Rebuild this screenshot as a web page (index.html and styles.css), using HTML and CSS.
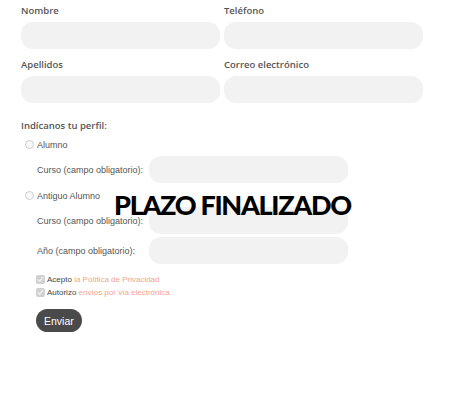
FILE: index.html
```html
<!DOCTYPE html>
<html lang="es">
<head>
    <meta charset="UTF-8">
    <meta name="viewport" content="width=device-width, initial-scale=1.0">
    <title>Inscripción</title>
    <link rel="stylesheet" href="styles.css">
</head>
<body>
    <form class="form">
        <div class="grid">
            <div class="field">
                <label>Nombre</label>
                <input type="text" class="input">
            </div>
            <div class="field">
                <label>Teléfono</label>
                <input type="text" class="input">
            </div>
            <div class="field">
                <label>Apellidos</label>
                <input type="text" class="input">
            </div>
            <div class="field">
                <label>Correo electrónico</label>
                <input type="text" class="input">
            </div>
        </div>

        <p class="section-title">Indícanos tu perfil:</p>

        <div class="radio-row">
            <input type="radio" name="perfil" disabled>
            <span>Alumno</span>
        </div>
        <div class="sub-row">
            <span class="sub-label">Curso (campo obligatorio):</span>
            <input type="text" class="input">
        </div>

        <div class="radio-row">
            <input type="radio" name="perfil" disabled>
            <span>Antiguo Alumno</span>
        </div>
        <div class="sub-row">
            <span class="sub-label">Curso (campo obligatorio):</span>
            <input type="text" class="input">
        </div>
        <div class="sub-row tight">
            <span class="sub-label">Año (campo obligatorio):</span>
            <input type="text" class="input">
        </div>

        <div class="check-row first">
            <input type="checkbox" checked disabled>
            <span>Acepto <a href="#">la Política de Privacidad</a></span>
        </div>
        <div class="check-row">
            <input type="checkbox" checked disabled>
            <span>Autorizo <a href="#">envíos por vía electrónica</a></span>
        </div>

        <button type="button" class="btn">Enviar</button>

        <div class="overlay">PLAZO FINALIZADO</div>
    </form>
</body>
</html>
```

FILE: styles.css
```css
body {
    margin: 0;
    font-family: "Liberation Sans", Arial, sans-serif;
    background: #fff;
    color: #555;
}
.form {
    position: relative;
    padding: 5px 0 0 21px;
    width: 402px;
}
.grid {
    display: grid;
    grid-template-columns: 199px 199px;
    column-gap: 4px;
}
.field label {
    display: block;
    font-family: "Open Sans", sans-serif;
    font-size: 9.5px;
    font-weight: 600;
    line-height: 12px;
    color: #555;
    margin-bottom: 5px;
}
.field:nth-child(n+3) label {
    margin-top: 10px;
}
.input {
    display: block;
    width: 199px;
    height: 27px;
    border: none;
    border-radius: 12px;
    background: #f2f2f2;
    box-sizing: border-box;
    padding: 0 10px;
}
.section-title {
    margin: 17px 0 0;
    font-family: "Open Sans", sans-serif;
    font-size: 9.5px;
    font-weight: 600;
    line-height: 12px;
    color: #555;
}
.radio-row {
    display: flex;
    align-items: center;
    height: 13px;
    margin-top: 6px;
    font-size: 9px;
}
.radio-row input {
    width: 9px;
    height: 9px;
    margin: 0 3px 0 4px;
}
.sub-row {
    display: flex;
    align-items: center;
    margin: 5px 0 0 16px;
    font-size: 9px;
}
.sub-row.tight {
    margin-top: 3px;
}
.sub-label {
    width: 112px;
}
.check-row {
    display: flex;
    align-items: center;
    height: 13px;
    margin-left: 15px;
    font-size: 8px;
    color: #444;
}
.check-row.first {
    margin-top: 9px;
}
.check-row input {
    width: 9px;
    height: 9px;
    margin: 0 2px 0 0;
}
.check-row a {
    color: #f3a48e;
    text-decoration: none;
}
.btn {
    display: block;
    margin: 10px 0 0 15px;
    height: 23px;
    padding: 0 8px;
    border: none;
    border-radius: 12px;
    background: #4a4a4a;
    color: #fff;
    font-family: "Liberation Sans", Arial, sans-serif;
    font-size: 10.5px;
}
.overlay {
    position: absolute;
    left: 114px;
    top: 189px;
    font-family: Lato, sans-serif;
    font-weight: 900;
    font-size: 27px;
    letter-spacing: -1.3px;
    color: #000;
    line-height: 32px;
}
```
